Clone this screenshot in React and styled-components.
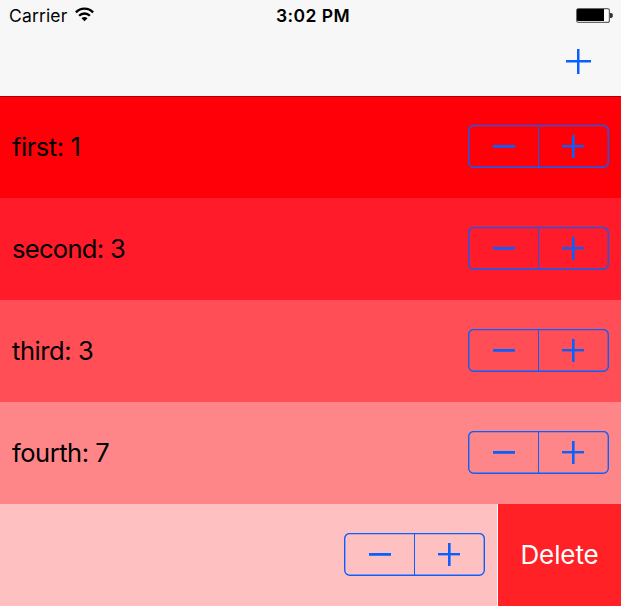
import React from "react";
import styled, { createGlobalStyle } from "styled-components";

const GlobalStyle = createGlobalStyle`
  body { margin: 0; background: #f7f7f7; }
  * { box-sizing: border-box; }
`;

const Screen = styled.main`
  width: 621px;
  height: 606px;
  overflow: hidden;
  font-family: Inter, "Liberation Sans", sans-serif;
  color: #000;
`;

const StatusBar = styled.div`
  height: 32px;
  display: grid;
  grid-template-columns: 1fr auto 1fr;
  padding: 0 8px 0 9px;
  line-height: 32px;
`;

const Carrier = styled.div`
  display: flex;
  align-items: flex-start;
  gap: 7.5px;
  font-size: 17.5px;
  letter-spacing: 0.15px;

  svg { margin-top: 7px; }
`;

const Clock = styled.div`
  font-size: 17.5px;
  font-weight: 600;
  letter-spacing: 0.45px;
  padding-left: 4px;
`;

const BatteryIcon = styled.svg`
  justify-self: end;
  margin-top: 8px;
`;

const NavBar = styled.header`
  height: 64px;
  display: flex;
  justify-content: flex-end;
  padding: 17px 30px 0 0;
`;

const IconButton = styled.button`
  width: 25px;
  height: 25px;
  padding: 0;
  border: 0;
  background: none;

  svg { display: block; }
`;

const Header = styled.div`
  height: 96px;
  background: #f7f7f7;
`;

const List = styled.ul`
  margin: 0;
  padding: 0;
  list-style: none;
`;

const Row = styled.li`
  height: 102px;
  display: flex;
  background: ${(p) => p.$color};
  box-shadow: ${(p) => (p.$first ? "inset 0 1px #a80008" : "none")};
`;

const Cell = styled.div`
  flex: 1;
  display: flex;
  align-items: center;
  justify-content: space-between;
  padding: 0 12px;
`;

const Label = styled.span`
  font-size: 25.5px;
  line-height: 30px;
  letter-spacing: ${(p) => p.$spacing}px;
`;

const StepperControl = styled.svg`
  display: block;
  margin-top: -1px;
`;

const DeleteButton = styled.button`
  width: 124px;
  padding: 0 0 2px;
  border: 0;
  border-left: 1px solid #fff;
  background: #ff2126;
  color: #fff;
  font-family: inherit;
  font-size: 26px;
  font-weight: 400;
  letter-spacing: -0.1px;
`;

const rows = [
  { name: "first", value: 1, color: "#ff0008", spacing: -0.45 },
  { name: "second", value: 3, color: "#ff1b29", spacing: -0.68 },
  { name: "third", value: 3, color: "#ff4e56", spacing: -0.42 },
  { name: "fourth", value: 7, color: "#ff8688", spacing: -0.47 },
];

function Stepper() {
  return (
    <StepperControl width="141" height="43" fill="#0a60ff">
      <rect x="0.7" y="0.6" width="139.6" height="41.7" rx="5" fill="none" stroke="#0a60ff" strokeWidth="1.4" />
      <rect x="70" y="1" width="1" height="41" />
      <rect x="25" y="20" width="22" height="2.8" />
      <rect x="94" y="20" width="22" height="2.4" />
      <rect x="104" y="10" width="2.6" height="23" />
    </StepperControl>
  );
}

function WifiIcon() {
  return (
    <svg width="19" height="15" viewBox="0 0 19 15" fill="none" stroke="#000" strokeWidth="2.3">
      <path d="M.9 5.4C5.7.3 13.3.3 18.1 5.4" />
      <path d="M4.1 8.8C7.1 5.7 11.9 5.7 14.9 8.8" />
      <path d="M6.5 11.3C8.2 9.6 10.8 9.6 12.5 11.3L9.5 14.3Z" fill="#000" stroke="none" />
    </svg>
  );
}

export default function App() {
  return (
    <Screen>
      <GlobalStyle />
      <Header>
        <StatusBar>
          <Carrier>
            Carrier
            <WifiIcon />
          </Carrier>
          <Clock>3:02 PM</Clock>
          <BatteryIcon width="37" height="15">
            <rect x="0.6" y="0.6" width="32.8" height="13.8" rx="2" fill="#fff" stroke="#666" strokeWidth="1.2" />
            <path d="M2 1h26v12H2a1 1 0 0 1-1-1V2a1 1 0 0 1 1-1z" />
            <path d="M34 5h1.5l1.3 1.2v2.6L35.5 10H34z" fill="#333" />
          </BatteryIcon>
        </StatusBar>
        <NavBar>
          <IconButton aria-label="Add">
            <svg width="25" height="25" fill="#0a60ff">
              <rect x="0" y="11" width="25" height="2.5" />
              <rect x="11" y="0" width="2.5" height="25" />
            </svg>
          </IconButton>
        </NavBar>
      </Header>
      <List>
        {rows.map((row, i) => (
          <Row key={row.name} $color={row.color} $first={i === 0}>
            <Cell>
              <Label $spacing={row.spacing}>{`${row.name}: ${row.value}`}</Label>
              <Stepper />
            </Cell>
          </Row>
        ))}
        <Row $color="#ffc0c1">
          <Cell>
            <Label $spacing={0} />
            <Stepper />
          </Cell>
          <DeleteButton>Delete</DeleteButton>
        </Row>
      </List>
    </Screen>
  );
}
